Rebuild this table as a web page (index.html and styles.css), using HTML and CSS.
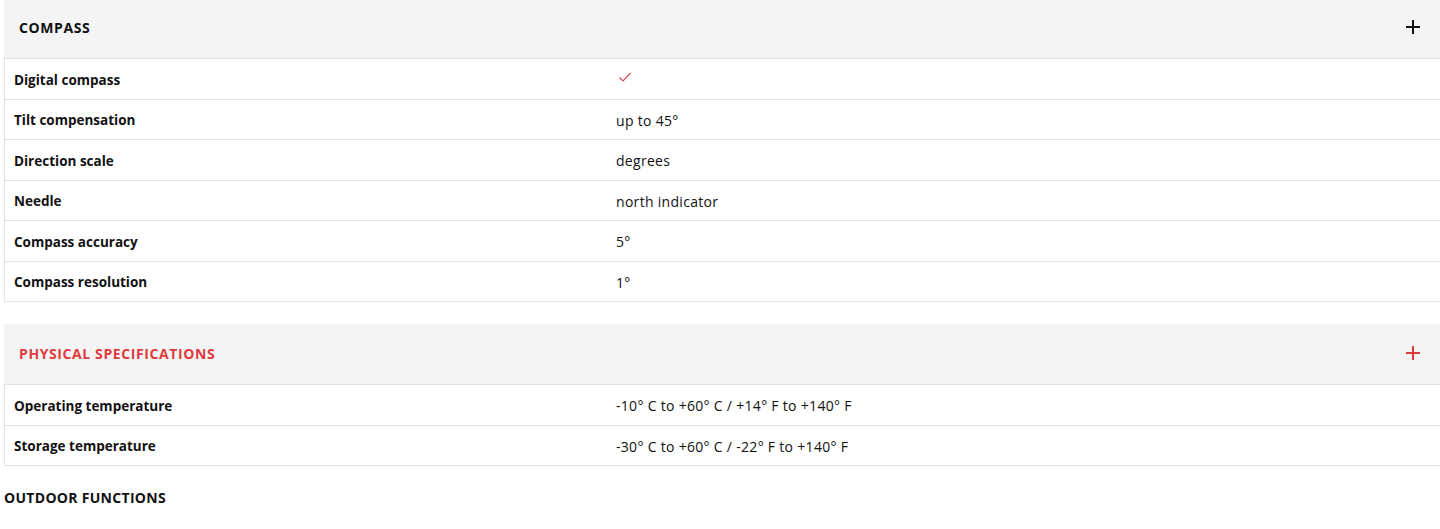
FILE: index.html
```html
<!DOCTYPE html>
<html lang="en">
<head>
    <meta charset="UTF-8">
    <meta name="viewport" content="width=device-width, initial-scale=1.0">
    <title>Specifications</title>
    <link rel="stylesheet" href="styles.css">
</head>
<body>

    <div class="specs">
        <div class="spec-group">
            <div class="spec-head">
                <span class="spec-title">COMPASS</span>
                <svg class="spec-toggle" width="16" height="16" viewBox="0 0 16 16"><path d="M8 1 V15 M1 8 H15" stroke="currentColor" stroke-width="2"/></svg>
            </div>
            <div class="spec-table">
                <div class="spec-row"><div class="spec-label">Digital compass</div><div class="spec-value"><svg class="check" width="14" height="12" viewBox="0 0 14 12"><path d="M1.5 6.5 L5 10 L12.5 2" fill="none" stroke="#d94b55" stroke-width="1.2"/></svg></div></div>
                <div class="spec-row"><div class="spec-label">Tilt compensation</div><div class="spec-value">up to 45°</div></div>
                <div class="spec-row"><div class="spec-label">Direction scale</div><div class="spec-value">degrees</div></div>
                <div class="spec-row"><div class="spec-label">Needle</div><div class="spec-value">north indicator</div></div>
                <div class="spec-row"><div class="spec-label">Compass accuracy</div><div class="spec-value">5°</div></div>
                <div class="spec-row"><div class="spec-label">Compass resolution</div><div class="spec-value">1°</div></div>
            </div>
        </div>

        <div class="spec-group active">
            <div class="spec-head">
                <span class="spec-title">PHYSICAL SPECIFICATIONS</span>
                <svg class="spec-toggle" width="16" height="16" viewBox="0 0 16 16"><path d="M8 1 V15 M1 8 H15" stroke="currentColor" stroke-width="2"/></svg>
            </div>
            <div class="spec-table">
                <div class="spec-row"><div class="spec-label">Operating temperature</div><div class="spec-value">-10° C to +60° C / +14° F to +140° F</div></div>
                <div class="spec-row"><div class="spec-label">Storage temperature</div><div class="spec-value">-30° C to +60° C / -22° F to +140° F</div></div>
            </div>
        </div>

        <div class="spec-next">OUTDOOR FUNCTIONS</div>
    </div>

</body>
</html>
```

FILE: styles.css
```css
body {
    margin: 0;
    padding: 0 0 0 4px;
    overflow: hidden;
    font-family: "Open Sans", Lato, sans-serif;
    color: #111;
    background: #fff;
}

.specs {
    width: 1450px;
    margin-top: -2px; /* page is scrolled a little */
}

.spec-group {
    margin-bottom: 22px;
}

.spec-head {
    display: flex;
    align-items: center;
    justify-content: space-between;
    height: 60px;
    padding: 0 33px 2px 15px;
    box-sizing: border-box;
    background-color: #f4f4f4;
    color: #111;
}

.spec-title {
    font-size: 14px;
    font-weight: 700;
    letter-spacing: 0.6px;
}

.spec-group.active .spec-head {
    color: #e03a3e;
}

.spec-table {
    border: 1px solid #e3e3e3;
}

.spec-row {
    display: flex;
    align-items: center;
    height: 39.5px;
    border-top: 1px solid #e3e3e3;
}

.spec-row:first-child {
    border-top: none;
}

.spec-label {
    width: 602px;
    padding-left: 9px;
    padding-top: 2px;
    font-size: 13.5px;
    font-weight: 700;
}

.spec-value {
    display: flex;
    align-items: center;
    padding-top: 2px;
    font-size: 14px;
    font-weight: 400;
    letter-spacing: 0.3px;
}

.check {
    margin: -6px 0 0 2px;
}

.spec-next {
    font-size: 14px;
    font-weight: 700;
    letter-spacing: 0.3px;
}
```
